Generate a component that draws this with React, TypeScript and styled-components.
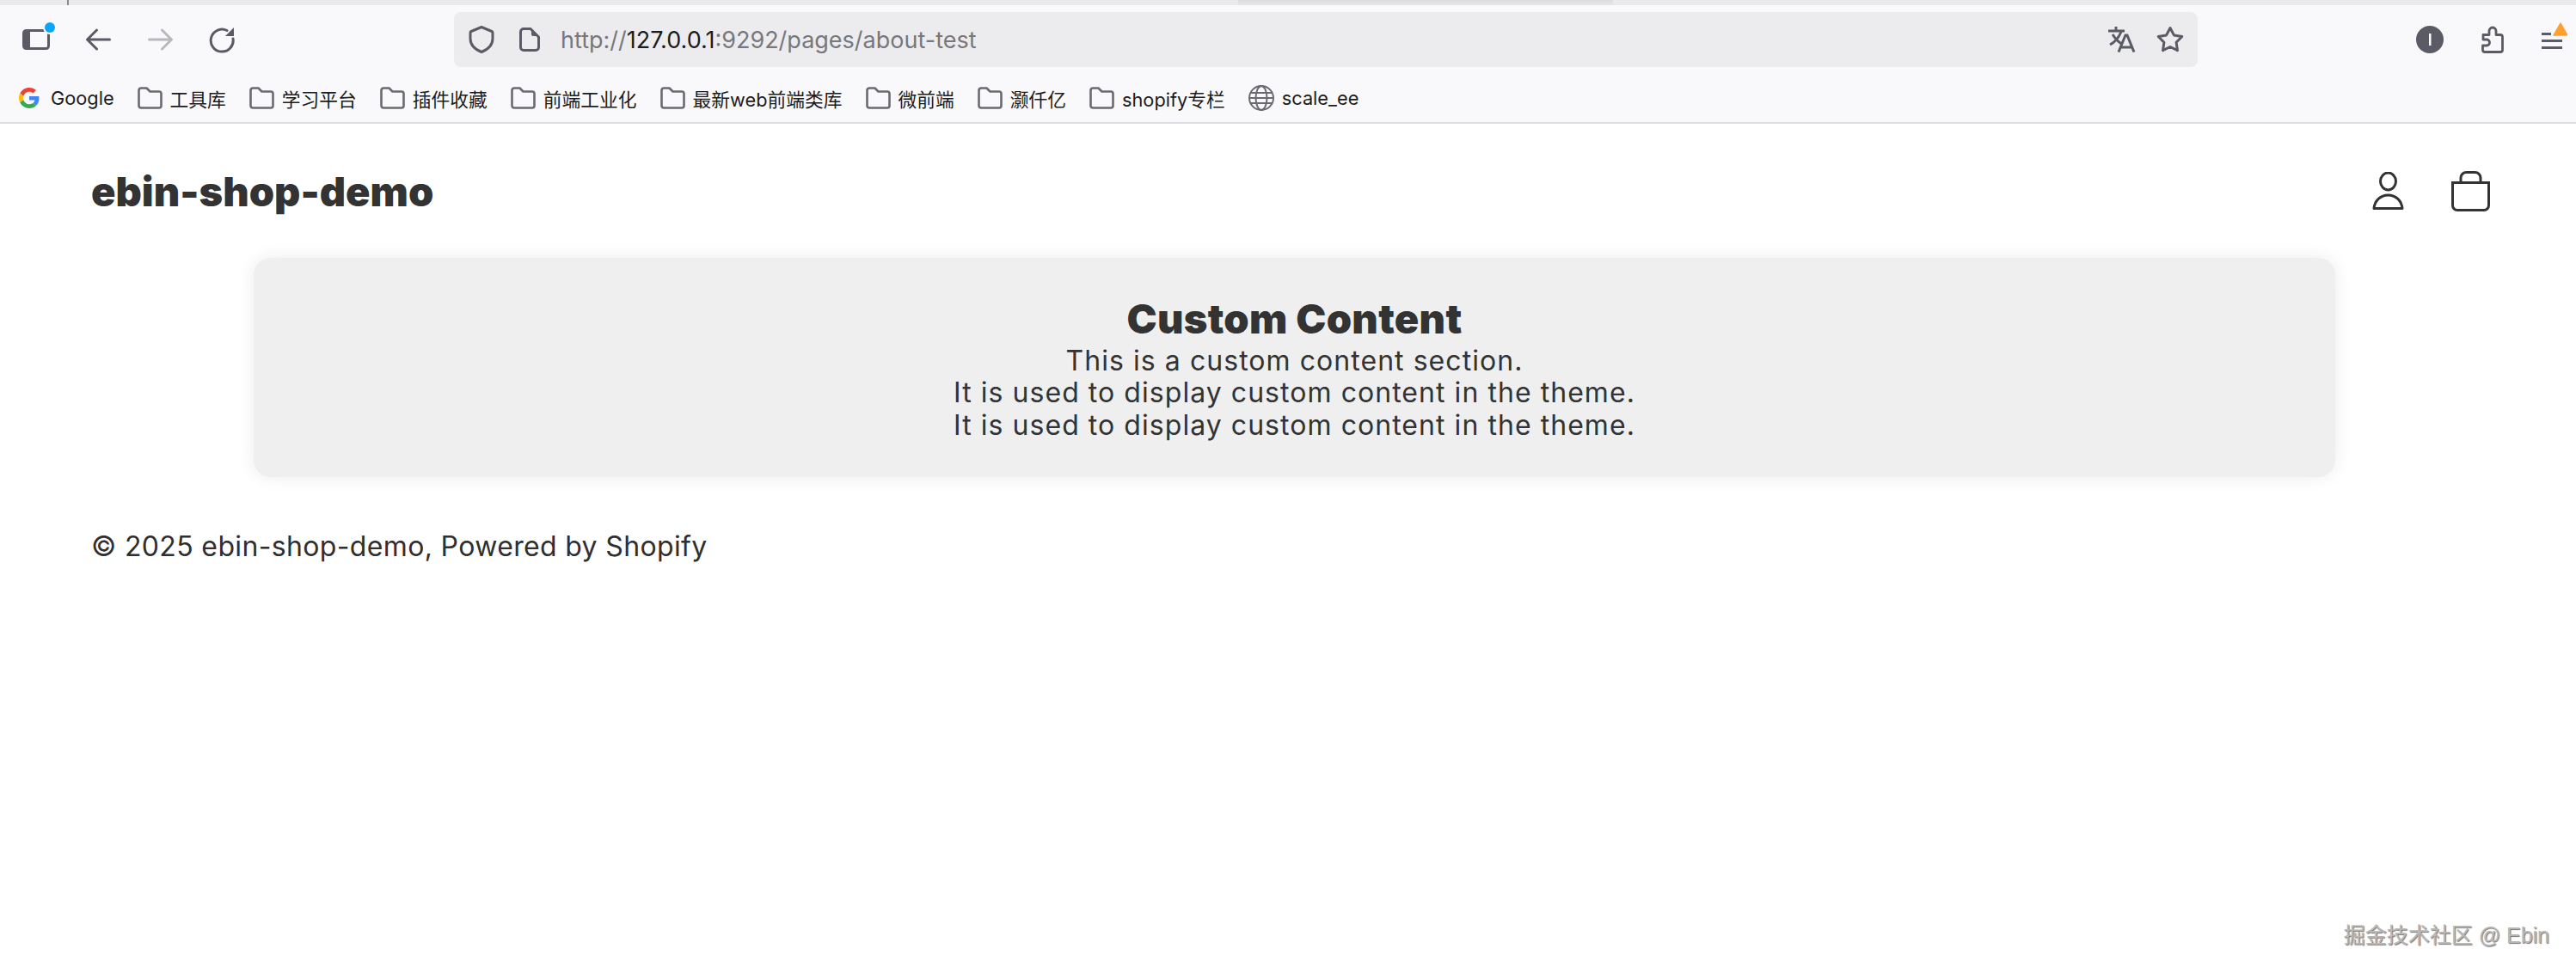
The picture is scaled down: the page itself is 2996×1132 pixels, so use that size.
import React from "react";
import styled, { createGlobalStyle } from "styled-components";

const GlobalStyle = createGlobalStyle`
  html, body {
    margin: 0;
    padding: 0;
    background: #fff;
  }
  body {
    font-family: "Liberation Sans", "Noto Sans CJK SC", sans-serif;
  }
`;

const Page = styled.div`
  position: relative;
  width: 2996px;
  height: 1132px;
  overflow: hidden;
  background: #fff;
`;

const TabStrip = styled.div`
  display: flex;
  height: 6px;
  background: #eaeaec;
`;

const TabDivider = styled.div`
  width: 2px;
  margin-left: 78px;
  background: #8a8a8e;
`;

const TabShadow = styled.div`
  width: 436px;
  margin-left: 1360px;
  background: linear-gradient(#dcdcde, #e6e6e8);
`;

const Toolbar = styled.div`
  display: flex;
  align-items: center;
  height: 80px;
  padding-left: 22px;
  background: #f9f9fb;
`;

const NavButtons = styled.div`
  display: flex;
  align-items: center;
  gap: 27px;
`;

const AddressBar = styled.div`
  display: flex;
  align-items: center;
  width: 2028px;
  height: 64px;
  margin-left: 249px;
  padding: 0 16px 0 17px;
  box-sizing: border-box;
  border-radius: 8px;
  background: #ececee;
`;

const SiteIcons = styled.div`
  display: flex;
  align-items: center;
  gap: 29px;
`;

const Url = styled.div`
  flex: 1;
  margin-left: 24px;
  font-family: Inter, sans-serif;
  font-size: 27px;
  color: #77777d;
`;

const UrlHost = styled.span`
  color: #1c1c20;
`;

const AddressActions = styled.div`
  display: flex;
  align-items: center;
  gap: 24px;
`;

const ToolbarActions = styled.div`
  display: flex;
  align-items: center;
  gap: 44px;
  margin-left: 254px;
`;

const Bookmarks = styled.div`
  display: flex;
  align-items: center;
  gap: 27px;
  height: 56px;
  padding-left: 22px;
  background: #f9f9fb;
  border-bottom: 2px solid #dedee2;
`;

const Bookmark = styled.div<{ $gap?: number }>`
  display: flex;
  align-items: center;
  gap: ${(p) => p.$gap ?? 9}px;
  font-family: Inter, "Noto Sans CJK SC", sans-serif;
  font-size: 21.75px;
  color: #1c1c20;
  white-space: nowrap;
`;

const Header = styled.header`
  display: flex;
  align-items: center;
  justify-content: space-between;
  height: 156px;
  padding: 0 100px 0 106px;
`;

const Logo = styled.div`
  font-family: Inter, sans-serif;
  font-size: 47px;
  font-weight: 900;
  color: #333;
`;

const HeaderIcons = styled.div`
  display: flex;
  align-items: center;
  gap: 55px;
`;

const Main = styled.main`
  padding: 0 280px 0 295px;
`;

const Card = styled.section`
  display: flex;
  flex-direction: column;
  align-items: center;
  justify-content: center;
  height: 255px;
  padding-top: 3px;
  box-sizing: border-box;
  border-radius: 20px;
  background: #efefef;
  box-shadow: 0 0 20px rgba(0, 0, 0, 0.08);
  font-family: Inter, sans-serif;
  color: #333;
`;

const CardTitle = styled.h2`
  margin: 0 0 4px;
  font-size: 47px;
  line-height: 52px;
  font-weight: 900;
  letter-spacing: 0.3px;
`;

const CardLine = styled.p`
  margin: 0;
  font-size: 32px;
  line-height: 37.5px;
  letter-spacing: 1.05px;
`;

const Footer = styled.footer`
  padding: 62px 106px 0;
  font-family: Inter, sans-serif;
  font-size: 32px;
  line-height: 38px;
  letter-spacing: 0.35px;
  color: #2f2f2f;
`;

const Watermark = styled.div`
  position: absolute;
  right: 31px;
  bottom: 28px;
  font-size: 25px;
  line-height: 32px;
  color: #b8b8b8;
  text-shadow: 1px 1px 1px rgba(0, 0, 0, 0.55);
`;

const bookmarks = [
  "工具库",
  "学习平台",
  "插件收藏",
  "前端工业化",
  "最新web前端类库",
  "微前端",
  "灏仟亿",
  "shopify专栏",
];

const SidebarIcon = () => (
  <svg width="44" height="44" viewBox="0 0 44 44">
    <rect x="5.5" y="11.5" width="29" height="21" rx="3" fill="none" stroke="#5b5b66" strokeWidth="3" />
    <path d="M6 14a2 2 0 0 1 2-2h5v20H8a2 2 0 0 1-2-2z" fill="#5b5b66" />
    <circle cx="36" cy="8" r="8" fill="#f9f9fb" />
    <circle cx="36" cy="8" r="6" fill="#0ca5f5" />
  </svg>
);

const ArrowIcon = ({ flip, color }: { flip?: boolean; color: string }) => (
  <svg width="44" height="44" viewBox="0 0 44 44" style={flip ? { transform: "scaleX(-1)" } : undefined}>
    <path d="M34.500 22H8.500M19.500 11 8.500 22l11 11" fill="none" stroke={color} strokeWidth="3" strokeLinecap="round" strokeLinejoin="round" />
  </svg>
);

const ReloadIcon = () => (
  <svg width="44" height="44" viewBox="0 0 44 44">
    <path d="M29 11.500A13 13 0 1 0 36 21" fill="none" stroke="#5b5b66" strokeWidth="3" strokeLinecap="round" />
    <path d="M37 8v10H27z" fill="#5b5b66" />
  </svg>
);

const ShieldIcon = () => (
  <svg width="30" height="32" viewBox="0 0 30 32">
    <path d="M15 1.500 27 6.500a1.500 1.500 0 0 1 1 1.400V15c0 7.500-5.500 12.500-13 15.500C7.500 27.500 2 22.500 2 15V7.900a1.500 1.500 0 0 1 1-1.400z" fill="none" stroke="#5b5b66" strokeWidth="3" strokeLinejoin="round" />
  </svg>
);

const DocIcon = () => (
  <svg width="24" height="28" viewBox="0 0 24 28">
    <path d="M5 1.500h8l9.500 9.500v12a3.500 3.500 0 0 1-3.500 3.500H5A3.500 3.500 0 0 1 1.500 23V5A3.500 3.500 0 0 1 5 1.500z" fill="none" stroke="#5b5b66" strokeWidth="3" strokeLinejoin="round" />
    <path d="M14 2l8 8h-6a2 2 0 0 1-2-2z" fill="#5b5b66" />
  </svg>
);

const TranslateIcon = () => (
  <svg width="32" height="30" viewBox="0 0 32 30">
    <path d="M0 5h19M9 0v5M15 6C12 13 8 18 2 21M5 9c3 5 7 9 12 12M12 29.500 20 10h2l8 19.500M15 24h12" fill="none" stroke="#5b5b66" strokeWidth="3" />
  </svg>
);

const StarIcon = () => (
  <svg width="32" height="32" viewBox="0 0 32 32">
    <path d="M16 2.500 20.400 10.900 29.800 12.500 23.100 19.300 24.500 28.700 16 24.500 7.500 28.700 8.900 19.300 2.200 12.500 11.600 10.900z" fill="none" stroke="#5b5b66" strokeWidth="3" strokeLinejoin="round" />
  </svg>
);

const AccountBadge = () => (
  <svg width="32" height="32" viewBox="0 0 32 32">
    <circle cx="16" cy="16" r="16" fill="#5b5b66" />
    <rect x="15" y="9" width="2.500" height="14" fill="#fff" />
  </svg>
);

const PuzzleIcon = () => (
  <svg width="26" height="32" viewBox="0 0 26 32">
    <path d="M4 30.500h18a2.500 2.500 0 0 0 2.500-2.500V13a2.500 2.500 0 0 0-2.500-2.500h-5V6a4 4 0 0 0-8 0v4.500H2V16h4a3.500 3.500 0 0 1 0 7H1.500v5A2.500 2.500 0 0 0 4 30.500z" fill="none" stroke="#5b5b66" strokeWidth="2.800" strokeLinejoin="round" />
  </svg>
);

const MenuIcon = () => (
  <svg width="30" height="40" viewBox="0 0 30 40">
    <path d="M0 13.500h11M0 21.500h24M0 29.500h24" fill="none" stroke="#5b5b66" strokeWidth="3" />
    <path d="M22 1 30 15H14z" fill="#ff9f2e" stroke="#ff9f2e" strokeWidth="1.500" strokeLinejoin="round" />
  </svg>
);

const GoogleIcon = () => (
  <svg width="24" height="24" viewBox="0 0 48 48">
    <path fill="#EA4335" d="M24 9.500c3.500 0 6.700 1.300 9.100 3.500l6.800-6.800C35.800 2.400 30.300 0 24 0 14.600 0 6.500 5.400 2.600 13.200l7.900 6.200C12.400 13.700 17.700 9.500 24 9.500z" />
    <path fill="#4285F4" d="M46.900 24.500c0-1.600-.1-3.100-.4-4.500H24v9h12.900c-.6 3-2.200 5.500-4.700 7.200l7.700 6c4.500-4.200 7-10.300 7-17.700z" />
    <path fill="#FBBC05" d="M10.500 28.600c-.5-1.400-.8-3-.8-4.600s.3-3.200.8-4.600l-7.900-6.200C.9 16.500 0 20.100 0 24s.9 7.500 2.600 10.800z" />
    <path fill="#34A853" d="M24 48c6.500 0 11.900-2.100 15.900-5.800l-7.700-6c-2.100 1.500-4.900 2.300-8.200 2.300-6.300 0-11.600-4.200-13.500-10l-7.900 6.200C6.500 42.600 14.600 48 24 48z" />
  </svg>
);

const FolderIcon = () => (
  <svg width="29" height="26" viewBox="0 0 29 26">
    <path d="M4 1.500h6.500l4 4H25a2.500 2.500 0 0 1 2.500 2.500v14a2.500 2.500 0 0 1-2.500 2.500H4A2.500 2.500 0 0 1 1.500 22V4A2.500 2.500 0 0 1 4 1.500z" fill="none" stroke="#6a6a70" strokeWidth="2.600" strokeLinejoin="round" />
  </svg>
);

const GlobeIcon = () => (
  <svg width="30" height="30" viewBox="0 0 30 30">
    <g fill="none" stroke="#6a6a70" strokeWidth="2">
      <circle cx="15" cy="15" r="14" />
      <ellipse cx="15" cy="15" rx="6.500" ry="14" />
      <path d="M1 15h28M3 9h24M3 21h24" />
    </g>
  </svg>
);

const UserIcon = () => (
  <svg width="37" height="44" viewBox="0 0 37 44">
    <ellipse cx="18.500" cy="11" rx="9" ry="10" fill="none" stroke="#333" strokeWidth="3" />
    <path d="M2 42.500C3 33 10 27 18.500 27S34 33 35 42.500z" fill="none" stroke="#333" strokeWidth="3" strokeLinejoin="round" />
  </svg>
);

const BagIcon = () => (
  <svg width="45" height="47" viewBox="0 0 45 47">
    <path d="M1.500 13.500h42V40a5.500 5.500 0 0 1-5.500 5.500H7A5.500 5.500 0 0 1 1.500 40z" fill="none" stroke="#333" strokeWidth="3" />
    <path d="M11 13V8a6.500 6.500 0 0 1 6.500-6.500h10A6.500 6.500 0 0 1 34 8v5" fill="none" stroke="#333" strokeWidth="3" />
  </svg>
);

const App = () => (
  <Page>
    <GlobalStyle />
    <TabStrip>
      <TabDivider />
      <TabShadow />
    </TabStrip>
    <Toolbar>
      <NavButtons>
        <SidebarIcon />
        <ArrowIcon color="#5b5b66" />
        <ArrowIcon flip color="#b8b8bd" />
        <ReloadIcon />
      </NavButtons>
      <AddressBar>
        <SiteIcons>
          <ShieldIcon />
          <DocIcon />
        </SiteIcons>
        <Url>
          http://<UrlHost>127.0.0.1</UrlHost>:9292/pages/about-test
        </Url>
        <AddressActions>
          <TranslateIcon />
          <StarIcon />
        </AddressActions>
      </AddressBar>
      <ToolbarActions>
        <AccountBadge />
        <PuzzleIcon />
        <MenuIcon />
      </ToolbarActions>
    </Toolbar>
    <Bookmarks>
      <Bookmark $gap={13}>
        <GoogleIcon />
        <span>Google</span>
      </Bookmark>
      {bookmarks.map((name) => (
        <Bookmark key={name}>
          <FolderIcon />
          <span>{name}</span>
        </Bookmark>
      ))}
      <Bookmark>
        <GlobeIcon />
        <span>scale_ee</span>
      </Bookmark>
    </Bookmarks>
    <Header>
      <Logo>ebin-shop-demo</Logo>
      <HeaderIcons>
        <UserIcon />
        <BagIcon />
      </HeaderIcons>
    </Header>
    <Main>
      <Card>
        <CardTitle>Custom Content</CardTitle>
        <CardLine>This is a custom content section.</CardLine>
        <CardLine>It is used to display custom content in the theme.</CardLine>
        <CardLine>It is used to display custom content in the theme.</CardLine>
      </Card>
    </Main>
    <Footer>© 2025 ebin-shop-demo, Powered by Shopify</Footer>
    <Watermark>掘金技术社区 @ Ebin</Watermark>
  </Page>
);

export default App;
